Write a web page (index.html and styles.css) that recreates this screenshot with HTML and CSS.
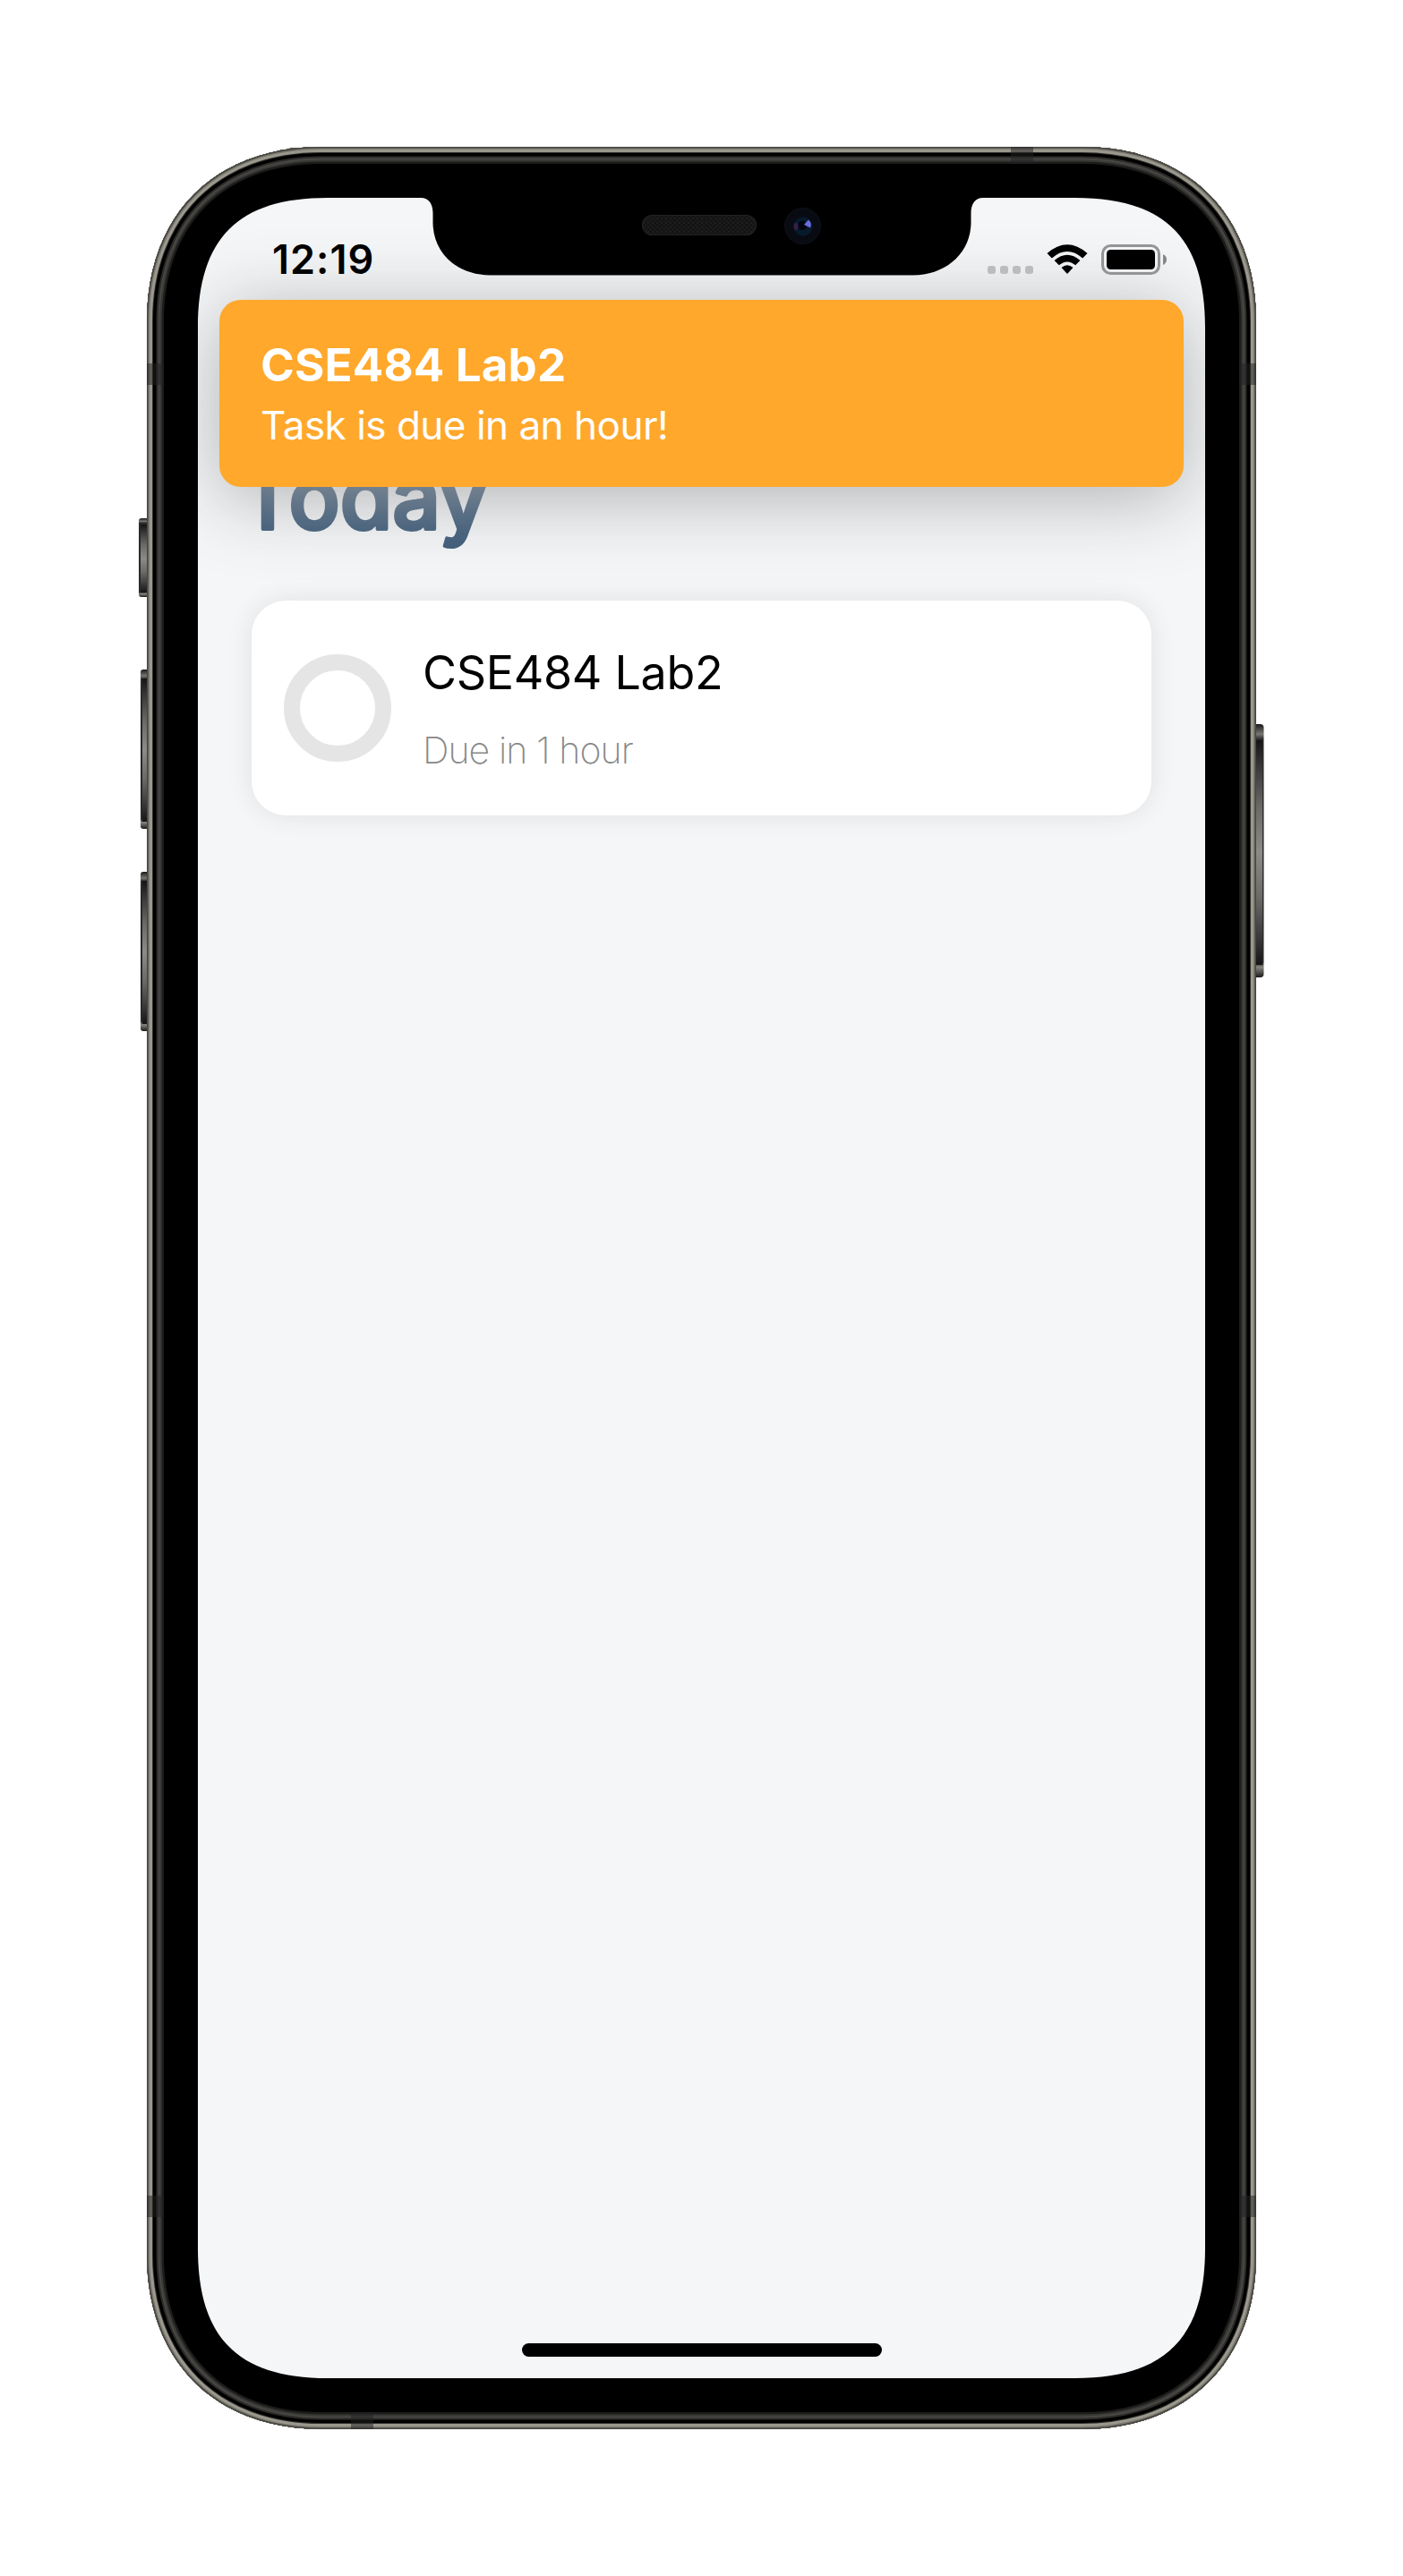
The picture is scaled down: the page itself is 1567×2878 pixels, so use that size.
FILE: index.html
```html
<!DOCTYPE html>
<html lang="en">
<head>
<meta charset="utf-8">
<title>Today</title>
<link rel="stylesheet" href="styles.css">
</head>
<body>
<main class="device">
  <svg class="frame" viewBox="-10 0 1260 2550" aria-hidden="true">
    <defs>
      <linearGradient id="key" x1="0" y1="0" x2="0" y2="1">
        <stop offset="0" stop-color="#151515"/><stop offset=".1" stop-color="#333"/><stop offset=".3" stop-color="#6a6a67"/><stop offset=".5" stop-color="#8b8c88"/><stop offset=".7" stop-color="#6a6a67"/><stop offset=".9" stop-color="#333"/><stop offset="1" stop-color="#151515"/>
      </linearGradient>
      <linearGradient id="cap" x1="0" y1="0" x2="0" y2="1">
        <stop offset="0" stop-color="#1a1a18"/><stop offset=".04" stop-color="#777873"/><stop offset=".06" stop-color="#2a2a2a"/><stop offset=".94" stop-color="#2a2a2a"/><stop offset=".96" stop-color="#85867f"/><stop offset="1" stop-color="#1a1a18"/>
      </linearGradient>
      <pattern id="mesh" width="5" height="5" patternUnits="userSpaceOnUse"><rect width="5" height="5" fill="#131313"/><path d="M0 0L5 5M5 0L0 5" stroke="#1f1f1f" stroke-width="1"/></pattern>
      <path id="body" d="M195 0H1044C1163 0 1239 76 1239 195V2355C1239 2474 1163 2550 1044 2550H195C76 2550 0 2474 0 2355V195C0 76 76 0 195 0Z"/>
      <clipPath id="bodyClip"><use href="#body"/></clipPath>
    </defs>
    <g fill="url(#cap)">
      <rect x="-9" y="415" width="14" height="88" rx="3"/>
      <rect x="-7" y="584" width="12" height="178" rx="3"/>
      <rect x="-7" y="810" width="12" height="178" rx="3"/>
      <rect x="1234" y="645" width="13.500" height="283" rx="4"/>
    </g>
    <g fill="url(#key)">
      <rect x="-7" y="422" width="8" height="76"/>
      <rect x="-5" y="594" width="6" height="160"/>
      <rect x="-5" y="820" width="6" height="160"/>
      <rect x="1238" y="663" width="8" height="251"/>
    </g>
    <g clip-path="url(#bodyClip)" fill="none">
      <use href="#body" fill="#000"/>
      <use href="#body" stroke="#1d1d1c" stroke-width="38"/>
      <use href="#body" stroke="#3a3937" stroke-width="33"/>
      <use href="#body" stroke="#484744" stroke-width="29"/>
      <use href="#body" stroke="#2b2a28" stroke-width="25"/>
      <use href="#body" stroke="#000" stroke-width="21"/>
      <use href="#body" stroke="#35342f" stroke-width="14"/>
      <use href="#body" stroke="#9b988e" stroke-width="12"/>
      <use href="#body" stroke="#7b7971" stroke-width="6"/>
      <use href="#body" stroke="#46453f" stroke-width="3"/>
      <g fill="#222" fill-opacity=".5">
        <path d="M0 242h19v24H0zM1220 242h19v24h-19zM0 2289h19v24H0zM1220 2289h19v24h-19zM965 0h25v19h-25zM228 2531h25v19h-25z"/>
      </g>
    </g>
    <rect x="553.500" y="76.500" width="127" height="22" rx="11" fill="url(#mesh)" stroke="#222" stroke-width="1.200"/>
    <circle cx="732.500" cy="88.500" r="20" fill="#090b12" stroke="#10121a"/>
    <circle cx="733" cy="89" r="10.500" fill="#061a2c"/>
    <circle cx="732" cy="88" r="5" fill="#05050f"/>
    <ellipse cx="725" cy="89" rx="2.500" ry="4" fill="#34204a"/>
    <path d="M734 87L739 81.500Q743.500 86 741 90.500Z" fill="#6a6de0"/>
  </svg>

  <section class="screen">
    <header class="status">
      <span class="clock">12:19</span>
      <span class="signal"><i></i><i></i><i></i><i></i></span>
      <svg class="wifi" viewBox="0 0 46 34" aria-hidden="true">
        <path d="M0.500 10Q23-9.500 45.500 10L40.200 15.400Q23 0.500 5.800 15.400Z"/>
        <path d="M8.600 18Q23 5.500 37.400 18L32.200 23.300Q23 15.500 13.800 23.300Z"/>
        <path d="M16.500 26Q23 20.500 29.500 26L23 32.900Z"/>
      </svg>
      <svg class="battery" viewBox="0 0 74 34" aria-hidden="true">
        <rect x="1.500" y="1.500" width="63" height="31" rx="9" fill="none" stroke="#939496" stroke-width="3"/>
        <rect x="6" y="6" width="54" height="22" rx="4.500"/>
        <path d="M69 11Q73 13 73 17T69 23Z" fill="#858688"/>
      </svg>
    </header>

    <div class="content">
      <svg class="heading" viewBox="0 0 300 120" role="heading"><text x="-13" y="86" textLength="277" lengthAdjust="spacingAndGlyphs">Today</text></svg>
      <article class="task">
        <span class="ring"></span>
        <div class="details">
          <h2 class="task-name">CSE484 Lab2</h2>
          <p class="due">Due in 1 hour</p>
        </div>
      </article>
    </div>

    <aside class="banner">
      <strong class="banner-title">CSE484 Lab2</strong>
      <span class="banner-text">Task is due in an hour!</span>
    </aside>
    <div class="home"></div>
  </section>
</main>
</body>
</html>
```
FILE: styles.css
```css
* { box-sizing: border-box; margin: 0; padding: 0; }

body {
  background: #fff;
  color: #000;
  font-family: Inter, "Liberation Sans", sans-serif;
}

.device {
  position: relative;
  width: 1239px;
  height: 2550px;
  margin: 164px;
  padding: 57px;
}

.frame {
  position: absolute;
  left: -10px;
  top: 0;
  width: 1260px;
  height: 2550px;
}

.screen {
  position: relative;
  width: 1125px;
  height: 2436px;
  display: flex;
  flex-direction: column;
  background: #f4f6f8;
  clip-path: path("M145 0H249C258 0 262.500 7 262.500 17V28C263 63 291 86.500 326 86.500H799C834 86.500 863 63 863.500 28V17C863.500 7 868 0 877 0H980C1080 0 1125 45 1125 145V2291C1125 2391 1080 2436 980 2436H145C45 2436 0 2391 0 2291V145C0 45 45 0 145 0Z");
}

.status {
  position: relative;
  z-index: 2;
  display: flex;
  align-items: flex-end;
  height: 86px;
  padding: 0 42px 0 83px;
}

.clock {
  margin-right: auto;
  font-size: 45px;
  font-weight: 570;
  letter-spacing: 1px;
  line-height: 54px;
  margin-bottom: -10px;
}

.signal { display: flex; gap: 5px; margin-right: 15px; margin-bottom: 1px; }
.signal i { width: 9px; height: 9px; border-radius: 3px; background: #bbbcbe; }
.wifi { width: 46px; height: 34px; margin-right: 15px; }
.battery { width: 74px; height: 34px; }

.content { padding: 198px 60px 0; }

.heading {
  display: block;
  width: 300px;
  height: 120px;
  overflow: visible;
}

.heading text {
  font-size: 97px;
  font-weight: 500;
  fill: #3c5a78;
  stroke: #3c5a78;
  stroke-width: 4px;
  stroke-linejoin: round;
}

.task {
  display: flex;
  align-items: center;
  gap: 35px;
  height: 240px;
  margin-top: 46px;
  padding: 0 36px;
  border-radius: 38px;
  background: #fff;
  box-shadow: 0 0 30px rgba(0, 0, 0, .09);
}

.ring {
  width: 120px;
  height: 120px;
  border: 18px solid #e5e5e5;
  border-radius: 50%;
}

.details { display: flex; flex-direction: column; gap: 30px; padding-top: 2px; }
.task-name { font-size: 52px; line-height: 62px; font-weight: 400; letter-spacing: -.3px; }
.due { font-size: 41px; line-height: 50px; font-weight: 200; color: #888; letter-spacing: -.9px; }

.banner {
  position: absolute;
  left: 24px;
  top: 114px;
  z-index: 1;
  display: flex;
  flex-direction: column;
  gap: 9px;
  width: 1077px;
  height: 209px;
  padding: 42px 46px;
  border-radius: 24px;
  background: #ffa82b;
  color: #fff;
  box-shadow: 0 12px 84px rgba(165, 165, 165, .85);
}

.banner-title { font-size: 51px; line-height: 62px; font-weight: 700; letter-spacing: .2px; }
.banner-text { font-size: 44px; line-height: 54px; font-weight: 400; letter-spacing: -.5px; }

.home {
  width: 402px;
  height: 15px;
  margin: auto auto 24px;
  border-radius: 8px;
  background: #000;
}
```
